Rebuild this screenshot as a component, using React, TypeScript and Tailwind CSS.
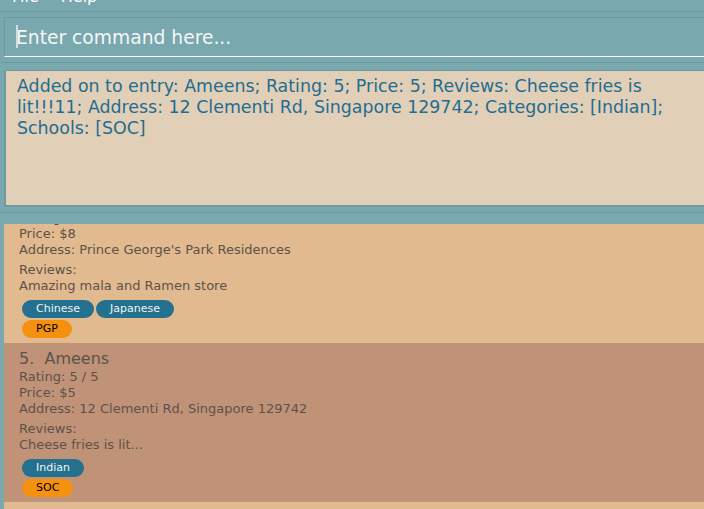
import React from "react";

type CellProps = {
  index: number;
  name: string;
  rating: string;
  price: string;
  address: string;
  review: string;
  cats: string[];
  schools: string[];
  bg: string;
};

function Cell({ index, name, rating, price, address, review, cats, schools, bg }: CellProps) {
  return (
    <div className={`${bg} pl-[15px] pt-[6px] pb-[5px] text-[#5d5249]`}>
      <div className="whitespace-pre text-[16px] leading-[20px]">{`${index}.  ${name}`}</div>
      <div className="text-[13px] leading-[16px]">Rating: {rating} / 5</div>
      <div className="text-[13px] leading-[16px]">Price: ${price}</div>
      <div className="text-[13px] leading-[16px]">Address: {address}</div>
      <div className="mt-[4px] text-[13px] leading-[16px]">Reviews:</div>
      <div className="text-[13px] leading-[16px]">{review}</div>
      <div className="mt-[6px] ml-[3px] flex gap-[2px]">
        {cats.map((c) => (
          <span
            key={c}
            className="h-[18px] rounded-full bg-[#23708f] px-[14px] text-[11px] leading-[18px] text-[#f4f4f4]"
          >
            {c}
          </span>
        ))}
      </div>
      <div className="mt-[2px] ml-[3px] flex gap-[2px]">
        {schools.map((s) => (
          <span
            key={s}
            className="h-[18px] rounded-full bg-[#f5910f] px-[14px] text-[11px] leading-[18px] text-black"
          >
            {s}
          </span>
        ))}
      </div>
    </div>
  );
}

export default function App() {
  return (
    <div className="flex h-[509px] w-[704px] flex-col overflow-hidden bg-[#79a8ae] font-['DejaVu_Sans',sans-serif]">
      {/* menu bar */}
      <div className="h-[12px] shrink-0 overflow-hidden border-b border-[#6b9aa0]">
        <div className="-mt-[13px] ml-[12px] flex gap-[22px] text-[16px] leading-[20px] text-white">
          <span>File</span>
          <span>Help</span>
        </div>
      </div>
      <div className="h-[5px] shrink-0" />
      {/* command box */}
      <div className="relative ml-[4px] h-[40px] shrink-0 border-t border-l border-b border-t-[#6b9aa0] border-l-[#6b9aa0] border-b-white pl-[11px] pt-[1px] text-[18.7px] leading-[37px] text-[#f5f7f7]">
        <span className="absolute left-[11px] top-[7px] h-[23px] w-[1.5px] bg-[#cfe0e2]" />
        Enter command here...
      </div>
      <div className="h-[5px] shrink-0" />
      <div className="h-[1px] shrink-0 bg-[#6b9aa0]" />
      <div className="h-[7px] shrink-0" />
      {/* result box */}
      <div className="ml-[4px] h-[137px] shrink-0 border-t border-l-2 border-b-2 border-[#6b9aa0] bg-[#e2cfb8] pl-[11px] pt-[5px]">
        <div className="w-[680px] text-[17.4px] leading-[21px] text-[#1f6d91]">
          Added on to entry: Ameens; Rating: 5; Price: 5; Reviews: Cheese fries is lit!!!11; Address: 12 Clementi Rd, Singapore 129742; Categories: [Indian]; Schools: [SOC]
        </div>
      </div>
      <div className="h-[5px] shrink-0" />
      <div className="h-[1px] shrink-0 bg-[#6b9aa0]" />
      <div className="h-[11px] shrink-0" />
      {/* list */}
      <div className="ml-[4px] flex-1 overflow-hidden">
        <div className="-mt-[40px]">
          <Cell
            index={4}
            name="Mala Express"
            rating="4"
            price="8"
            address="Prince George's Park Residences"
            review="Amazing mala and Ramen store"
            cats={["Chinese", "Japanese"]}
            schools={["PGP"]}
            bg="bg-[#e2ba8f]"
          />
          <Cell
            index={5}
            name="Ameens"
            rating="5"
            price="5"
            address="12 Clementi Rd, Singapore 129742"
            review="Cheese fries is lit..."
            cats={["Indian"]}
            schools={["SOC"]}
            bg="bg-[#c09278]"
          />
          <Cell
            index={6}
            name="Techno Edge"
            rating="3"
            price="6"
            address="2 Engineering Drive 4"
            review="Good food"
            cats={["Western"]}
            schools={["FOE"]}
            bg="bg-[#e2ba8f]"
          />
        </div>
      </div>
    </div>
  );
}
